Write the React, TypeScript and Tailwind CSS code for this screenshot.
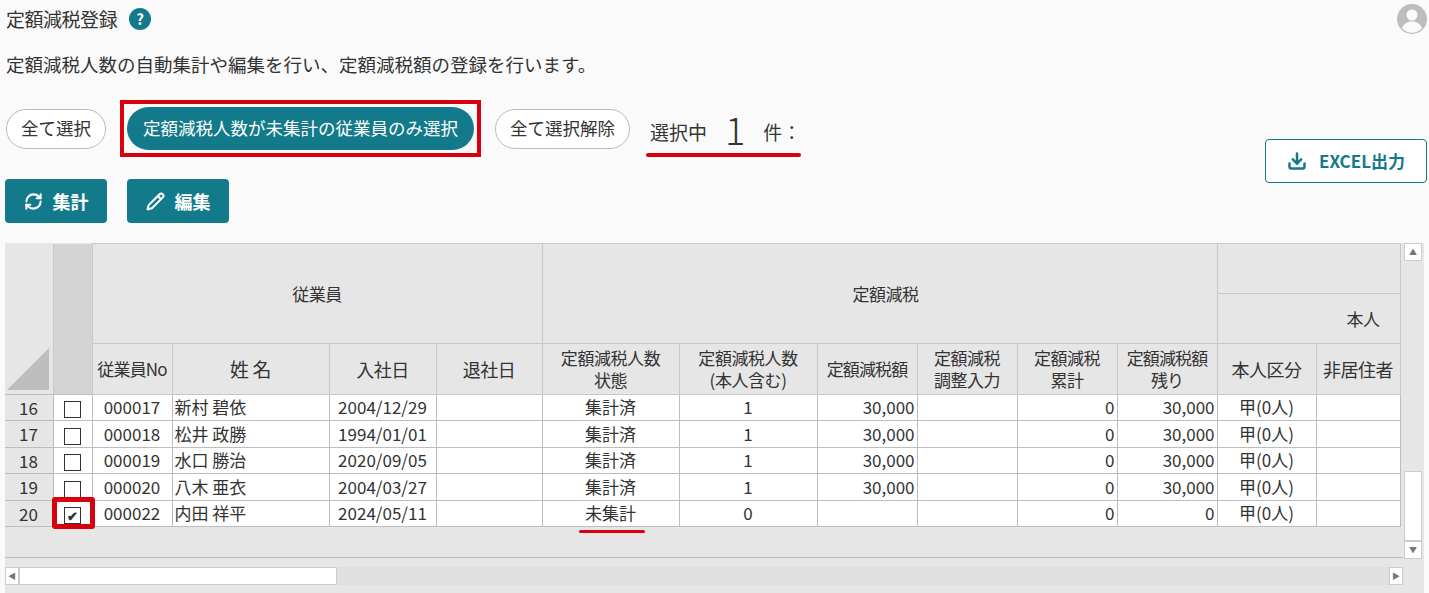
import { Download, RefreshCw, Pencil } from "lucide-react";

const font = { fontFamily: '"Noto Sans CJK JP", "Noto Sans", sans-serif' };

const rows = [
  { n: 16, no: "000017", name: "新村 碧依", date: "2004/12/29", st: "集計済", cnt: "1", amt: "30,000", rem: "30,000" },
  { n: 17, no: "000018", name: "松井 政勝", date: "1994/01/01", st: "集計済", cnt: "1", amt: "30,000", rem: "30,000" },
  { n: 18, no: "000019", name: "水口 勝治", date: "2020/09/05", st: "集計済", cnt: "1", amt: "30,000", rem: "30,000" },
  { n: 19, no: "000020", name: "八木 亜衣", date: "2004/03/27", st: "集計済", cnt: "1", amt: "30,000", rem: "30,000" },
  { n: 20, no: "000022", name: "内田 祥平", date: "2024/05/11", st: "未集計", cnt: "0", amt: "", rem: "0", checked: true },
];

const widths = [48, 39, 80, 157, 107, 106, 137, 138, 100, 100, 100, 100, 99, 84];

const hd = "border border-[#c8c8c8] bg-[#e6e6e6] font-normal text-center leading-[22px] text-[17px] tracking-tight";
const td = "border border-[#bdbdbd] bg-white px-[2px] text-[17px] h-[26px] leading-[24px] whitespace-nowrap";

export default function App() {
  return (
    <div className="w-[1429px] h-[593px] overflow-hidden bg-[#fafafa] text-[#333]" style={font}>
      <div className="flex h-[30px] items-center justify-between pl-[6px] pr-[2px] mt-[4px]">
        <div className="flex items-center gap-[12px]">
          <span className="text-[19px] tracking-tight">定額減税登録</span>
          <span className="flex h-[22px] w-[22px] items-center justify-center rounded-full bg-[#127a8a] text-[15px] font-bold text-white">?</span>
        </div>
        <svg width="30" height="30" viewBox="0 0 30 30">
          <circle cx="15" cy="15" r="15" fill="#bdbdbd" />
          <circle cx="15" cy="11" r="5.5" fill="#fafafa" />
          <path d="M5 24c2-5 6-6.5 10-6.5s8 1.5 10 6.5a13 13 0 0 1-20 0z" fill="#fafafa" />
        </svg>
      </div>
      <p className="mt-[18px] h-[24px] pl-[6px] text-[18.5px] leading-[24px]">定額減税人数の自動集計や編集を行い、定額減税額の登録を行います。</p>

      <div className="flex justify-between pr-[2px]">
        <div>
          <div className="mt-[24px] flex h-[57px] items-center pl-[6px]">
            <button className="h-[40px] rounded-full border border-[#bbb] bg-white px-[14px] text-[17.5px]">全て選択</button>
            <div className="ml-[14px] border-[4px] border-[#d7000f] p-[3px]">
              <button className="h-[43px] rounded-full bg-[#127a8a] px-[16px] text-[17.5px] text-white">定額減税人数が未集計の従業員のみ選択</button>
            </div>
            <button className="ml-[14px] h-[40px] rounded-full border border-[#bbb] bg-white px-[14px] text-[17.5px]">全て選択解除</button>
            <div className="relative ml-[20px] flex items-end gap-[18px] text-[19px]">
              <span>選択中</span>
              <span className="text-[38px] leading-[36px] font-light">1</span>
              <span>件：</span>
              <div className="absolute -bottom-[10px] -left-[4px] h-[4px] w-[155px] rounded bg-[#d7000f]" />
            </div>
          </div>
          <div className="mt-[22px] flex gap-[20px] pl-[5px]">
            <button className="flex h-[44px] w-[102px] items-center justify-center gap-[10px] rounded bg-[#127a8a] text-[18px] font-bold text-white">
              <RefreshCw size={19} strokeWidth={2.6} />集計
            </button>
            <button className="flex h-[44px] w-[102px] items-center justify-center gap-[10px] rounded bg-[#127a8a] text-[18px] font-bold text-white">
              <Pencil size={19} strokeWidth={2.6} />編集
            </button>
          </div>
        </div>
        <button className="mt-[63px] flex h-[44px] w-[162px] items-center justify-center gap-[12px] rounded border border-[#127a8a] bg-white text-[17px] font-bold text-[#127a8a]">
          <Download size={20} strokeWidth={3} />EXCEL出力
        </button>
      </div>

      <div className="mx-[5px] mt-[20px] flex h-[350px] bg-[#e6e6e6]">
        <div className="flex w-[1398px] flex-col">
          <div className="h-[314px] overflow-hidden">
            <table className="table-fixed border-collapse" style={{ width: widths.reduce((a, b) => a + b, 0) }}>
              <colgroup>
                {widths.map((w, i) => <col key={i} style={{ width: w }} />)}
              </colgroup>
              <thead>
                <tr className="h-[50px]">
                  <th rowSpan={2} className="border-0 bg-[#e6e6e6]" />
                  <th rowSpan={3} className="border-x border-[#c8c8c8] bg-[#d4d4d4]" />
                  <th colSpan={4} rowSpan={2} className={hd}>従業員</th>
                  <th colSpan={6} rowSpan={2} className={hd}><span className="relative left-[6px]">定額減税</span></th>
                  <th colSpan={2} className={hd} />
                </tr>
                <tr className="h-[50px]">
                  <th colSpan={2} className={hd + " text-right pr-[20px]"}>本人</th>
                </tr>
                <tr className="h-[50px]">
                  <th className="bg-[#e6e6e6] p-0 align-bottom">
                    <svg width="48" height="50" viewBox="0 0 48 50"><polygon points="44,4 44,46 2,46" fill="#bdbdbd" /></svg>
                  </th>
                  <th className={hd + " text-[15.5px] tracking-tighter whitespace-nowrap"}>従業員No</th>
                  <th className={hd + " text-[19px]"}>姓 名</th>
                  <th className={hd + " text-[18px]"}>入社日</th>
                  <th className={hd + " text-[18px]"}>退社日</th>
                  <th className={hd}>定額減税人数<br />状態</th>
                  <th className={hd}>定額減税人数<br />(本人含む)</th>
                  <th className={hd + " text-[16px] tracking-tighter whitespace-nowrap"}>定額減税額</th>
                  <th className={hd}>定額減税<br />調整入力</th>
                  <th className={hd}>定額減税<br />累計</th>
                  <th className={hd + " text-[16px] tracking-tighter whitespace-nowrap"}>定額減税額<br />残り</th>
                  <th className={hd + " text-[18px]"}>本人区分</th>
                  <th className={hd + " text-[18px]"}>非居住者</th>
                </tr>
              </thead>
              <tbody>
                {rows.map((r) => (
                  <tr key={r.n}>
                    <td className="h-[26px] border-y border-[#bdbdbd] bg-[#e6e6e6] pl-[14px] text-[17px]">{r.n}</td>
                    <td className={td + " relative text-center"}>
                      <span className="inline-flex h-[17px] w-[17px] items-center justify-center border border-[#333] bg-white align-middle text-[13px] font-bold leading-none">{r.checked ? "✔" : ""}</span>
                      {r.checked && <div className="absolute -left-[2px] -top-[4px] h-[32px] w-[43px] rounded-[3px] border-[5px] border-[#d7000f]" />}
                    </td>
                    <td className={td + " text-center"}>{r.no}</td>
                    <td className={td}>{r.name}</td>
                    <td className={td + " text-center"}>{r.date}</td>
                    <td className={td} />
                    <td className={td + " relative text-center"}>
                      {r.st}
                      {r.checked && <div className="absolute bottom-[-7px] left-[36px] h-[3px] w-[66px] rounded bg-[#d7000f]" />}
                    </td>
                    <td className={td + " text-center"}>{r.cnt}</td>
                    <td className={td + " text-right"}>{r.amt}</td>
                    <td className={td} />
                    <td className={td + " text-right"}>0</td>
                    <td className={td + " text-right"}>{r.rem}</td>
                    <td className={td + " text-center"}>甲(0人)</td>
                    <td className={td} />
                  </tr>
                ))}
              </tbody>
            </table>
          </div>
          <div className="border-t border-[#bdbdbd] pt-[9px]">
            <div className="flex h-[18px] items-center bg-[#e0e0e0]">
              <span className="flex h-[18px] w-[14px] items-center justify-center border border-[#ccc] bg-white text-[8px] text-[#777]">◀</span>
              <div className="h-[18px] w-[318px] border border-[#ccc] bg-white" />
              <div className="flex-1" />
              <span className="flex h-[18px] w-[14px] items-center justify-center border border-[#ccc] bg-white text-[8px] text-[#777]">▶</span>
            </div>
          </div>
        </div>
        <div className="ml-[1px] flex h-[316px] w-[18px] flex-col bg-[#e6e6e6]">
          <span className="flex h-[18px] items-center justify-center border border-[#ccc] bg-white text-[8px] text-[#777]">▲</span>
          <div className="flex-1" />
          <div className="h-[70px] border border-[#ccc] bg-white" />
          <span className="flex h-[18px] items-center justify-center border border-[#ccc] bg-white text-[8px] text-[#777]">▼</span>
        </div>
      </div>
    </div>
  );
}
